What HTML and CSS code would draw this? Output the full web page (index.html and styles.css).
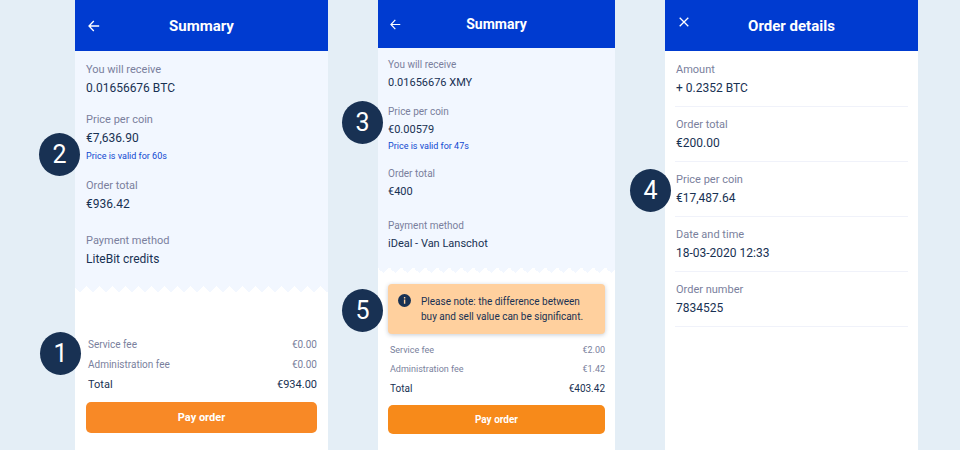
FILE: index.html
```html
<!DOCTYPE html>
<html lang="en">
<head>
  <meta charset="UTF-8" />
  <meta name="viewport" content="width=device-width, initial-scale=1.0" />
  <title>Order summary</title>
  <link rel="stylesheet" href="styles.css">
</head>
<body>
  <main class="screens">
    <section class="screen">
      <header class="topbar">
        <button type="button" class="icon-button" aria-label="Back">
          <svg width="12" height="12" viewBox="0 0 12 12"><path d="M11.2 6H1M5.8 1L1 6l4.8 5" /></svg>
        </button>
        <h1>Summary</h1>
      </header>
      <div class="receipt">
        <dl class="fields">
          <div class="field">
            <dt>You will receive</dt>
            <dd>0.01656676 BTC</dd>
          </div>
          <div class="field">
            <dt>Price per coin</dt>
            <dd>€7,636.90</dd>
            <dd class="hint">Price is valid for 60s</dd>
            <span class="marker marker-hint">2</span>
          </div>
          <div class="field">
            <dt>Order total</dt>
            <dd>€936.42</dd>
          </div>
          <div class="field payment">
            <dt>Payment method</dt>
            <dd>LiteBit credits</dd>
          </div>
        </dl>
      </div>
      <div class="checkout">
        <table class="fees">
          <tr><th scope="row">Service fee</th><td>€0.00</td></tr>
          <tr><th scope="row">Administration fee</th><td>€0.00</td></tr>
          <tr class="total"><th scope="row">Total</th><td>€934.00</td></tr>
        </table>
        <span class="marker marker-fees">1</span>
        <button type="button" class="pay">Pay order</button>
      </div>
    </section>

    <section class="screen compact">
      <header class="topbar">
        <button type="button" class="icon-button" aria-label="Back">
          <svg width="11" height="11" viewBox="0 0 12 12"><path d="M11.2 6H1M5.8 1L1 6l4.8 5" /></svg>
        </button>
        <h1>Summary</h1>
      </header>
      <div class="receipt">
        <dl class="fields">
          <div class="field">
            <dt>You will receive</dt>
            <dd>0.01656676 XMY</dd>
          </div>
          <div class="field">
            <dt>Price per coin</dt>
            <dd>€0.00579</dd>
            <dd class="hint">Price is valid for 47s</dd>
            <span class="marker marker-price">3</span>
          </div>
          <div class="field">
            <dt>Order total</dt>
            <dd>€400</dd>
          </div>
          <div class="field payment">
            <dt>Payment method</dt>
            <dd>iDeal - Van Lanschot</dd>
          </div>
        </dl>
      </div>
      <div class="notice">
        <svg width="13" height="13" viewBox="0 0 13 13">
          <circle cx="6.5" cy="6.5" r="6.5" fill="#183153" />
          <path d="M5.9 3h1.4v1.4H5.9zM5.9 5.6h1.4v4.2H5.9z" fill="#ffd09e" />
        </svg>
        <p>Please note: the difference between<br>buy and sell value can be significant.</p>
        <span class="marker marker-notice">5</span>
      </div>
      <div class="checkout">
        <table class="fees">
          <tr><th scope="row">Service fee</th><td>€2.00</td></tr>
          <tr><th scope="row">Administration fee</th><td>€1.42</td></tr>
          <tr class="total"><th scope="row">Total</th><td>€403.42</td></tr>
        </table>
        <button type="button" class="pay">Pay order</button>
      </div>
    </section>

    <section class="screen">
      <header class="topbar">
        <button type="button" class="icon-button close" aria-label="Close">
          <svg width="10" height="10" viewBox="0 0 10 10"><path d="M.7.7l8.6 8.6M9.3.7L.7 9.3" /></svg>
        </button>
        <h1>Order details</h1>
      </header>
      <dl class="details">
        <div class="field">
          <dt>Amount</dt>
          <dd>+ 0.2352 BTC</dd>
        </div>
        <div class="field">
          <dt>Order total</dt>
          <dd>€200.00</dd>
        </div>
        <div class="field">
          <dt>Price per coin</dt>
          <dd>€17,487.64</dd>
          <span class="marker marker-details">4</span>
        </div>
        <div class="field">
          <dt>Date and time</dt>
          <dd>18-03-2020 12:33</dd>
        </div>
        <div class="field">
          <dt>Order number</dt>
          <dd>7834525</dd>
        </div>
      </dl>
    </section>
  </main>
</body>
</html>
```
FILE: styles.css
```css
* {
  box-sizing: border-box;
}
body {
  margin: 0;
  background: #e4eef6;
  color: #183153;
  font-family: Roboto, "Liberation Sans", sans-serif;
  font-size: 12px;
}
.screens {
  display: grid;
  grid-template-columns: 253fr 237fr 253fr;
  gap: 50px;
  min-height: 100vh;
  padding: 0 42px 0 75px;
}
.screen {
  display: flex;
  flex-direction: column;
  background: #fff;
}

/* header */
.topbar {
  display: grid;
  grid-template-columns: 37px 1fr 37px;
  align-items: center;
  height: 51px;
  background: #003bd0;
  color: #fff;
}
.topbar h1 {
  margin: 0;
  font-size: 15px;
  line-height: 18px;
  text-align: center;
}
.icon-button {
  display: flex;
  justify-content: center;
  padding: 4px;
  border: none;
  background: none;
  color: inherit;
  cursor: pointer;
}
.icon-button svg {
  fill: none;
  stroke: currentColor;
  stroke-width: 1.3;
}
.close {
  padding-bottom: 12px;
}

/* label + value pairs */
.fields, .details {
  margin: 0;
}
.field {
  position: relative;
}
.field dt {
  color: #7a7f9d;
  font-size: 11px;
  line-height: 18px;
}
.field dd {
  margin: 0;
  line-height: 19px;
}
.field .hint {
  color: #1048d0;
  font-size: 9px;
  line-height: 16px;
}
.fields {
  display: flex;
  flex-direction: column;
  gap: 13px;
}
.payment {
  margin-top: 5px;
}
.receipt {
  padding: 10px 11px 23px;
  background: conic-gradient(from 135deg at top, #fff 90deg, transparent 0) 5px 100% / 13px 6px repeat-x, #f2f7ff;
}
.details {
  padding: 1px 10px 0;
}
.details .field {
  padding: 9px 1px 8px;
  border-bottom: 1px solid #f0f2fa;
}

/* numbered markers */
.marker {
  position: absolute;
  display: flex;
  align-items: center;
  justify-content: center;
  width: 41px;
  height: 43px;
  border-radius: 50%;
  background: #183153;
  color: #fff;
  font-size: 25px;
}
.marker-hint {
  top: 22px;
  left: -47px;
}
.marker-price {
  top: -2px;
  left: -46px;
}
.marker-details {
  top: 7px;
  left: -45px;
}
.marker-notice {
  top: 5px;
  left: -46px;
}
.marker-fees {
  top: -3px;
  left: -35px;
}

/* warning */
.notice {
  position: relative;
  display: flex;
  gap: 10px;
  margin: 11px 10px 0;
  padding: 10px;
  border-radius: 4px;
  background: #ffd09e;
  box-shadow: 0 1px 4px rgba(24, 49, 83, 0.25);
}
.notice svg {
  flex: none;
}
.notice p {
  margin: 0;
  font-size: 10px;
  line-height: 15px;
  white-space: nowrap;
}

/* fees and button */
.checkout {
  position: relative;
  margin-top: auto;
  padding: 0 11px 17px;
}
.fees {
  width: 100%;
  border-collapse: collapse;
  color: #7a7f9d;
  font-size: 10px;
  line-height: 20px;
}
.fees th {
  padding: 0 0 0 2px;
  font-weight: normal;
  text-align: left;
}
.fees td {
  padding: 0;
  text-align: right;
}
.fees .total {
  color: #183153;
  font-size: 11px;
}
.pay {
  display: block;
  width: 100%;
  height: 31px;
  margin-top: 7px;
  border: none;
  border-radius: 5px;
  background: #f88926;
  color: #fff;
  font-family: inherit;
  font-size: 11px;
  font-weight: bold;
  cursor: pointer;
}

/* middle screen is drawn slightly smaller */
.compact .topbar {
  grid-template-columns: 35px 1fr 35px;
  height: 48px;
}
.compact .topbar h1 {
  font-size: 14px;
}
.compact .receipt {
  padding: 8px 10px 20px;
  background-size: 12px 6px, auto;
}
.compact .fields {
  gap: 11px;
}
.compact .field dt {
  font-size: 10px;
  line-height: 17px;
}
.compact .field dd {
  font-size: 11px;
  line-height: 19px;
}
.compact .field .hint {
  font-size: 9px;
  line-height: 15px;
}
.compact .checkout {
  padding: 0 10px 16px;
}
.compact .fees {
  font-size: 9px;
  line-height: 19px;
}
.compact .fees .total {
  font-size: 10px;
}
.compact .pay {
  height: 29px;
  background: #f78a1a;
  font-size: 10px;
}
```
